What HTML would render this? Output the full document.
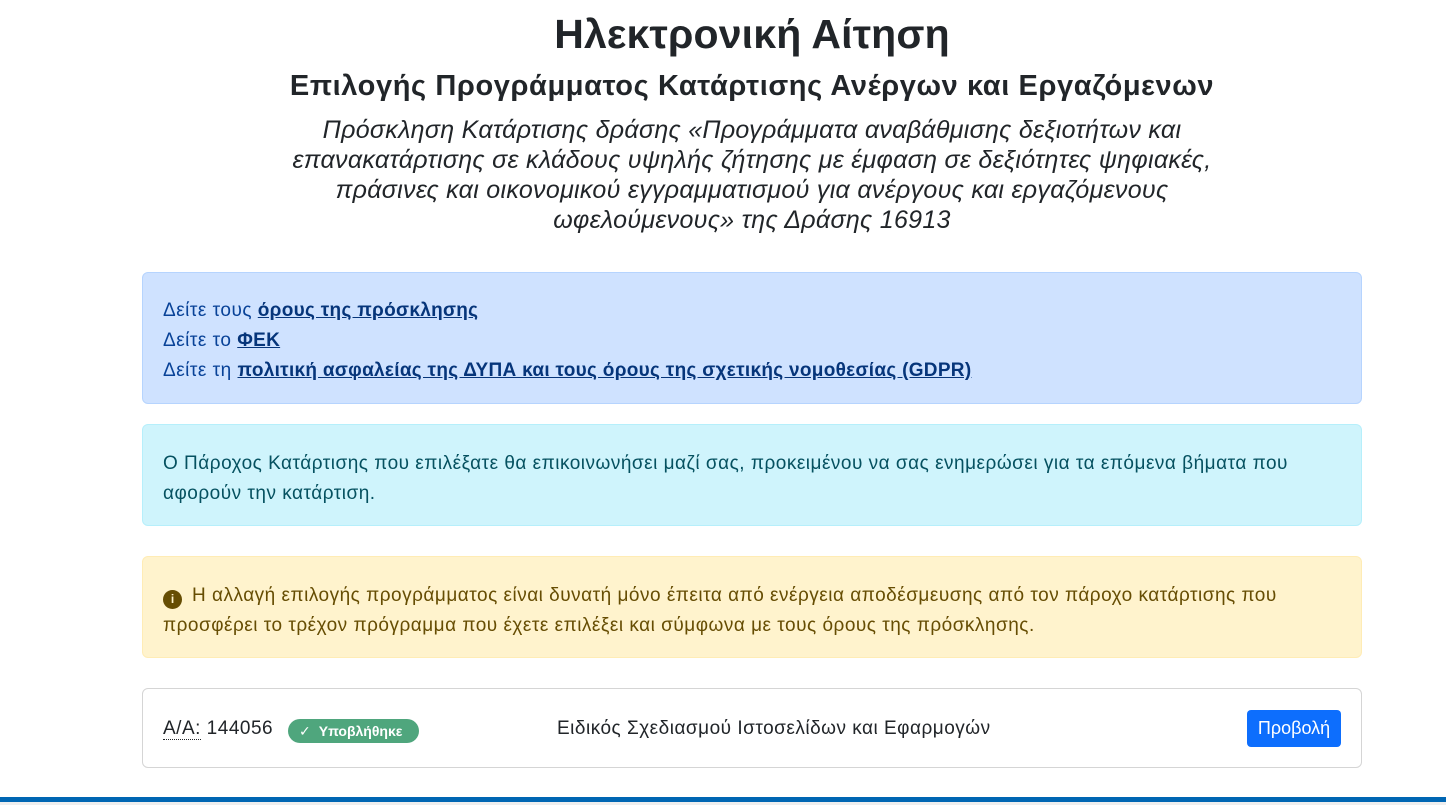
<!DOCTYPE html>
<html><head><meta charset="utf-8"><style>
body{margin:0;background:#fff;font-family:"Liberation Sans","DejaVu Sans",sans-serif;color:#212529;width:1446px;height:805px;overflow:hidden;position:relative}
h1{position:absolute;left:142px;width:1220px;top:9px;margin:0;text-align:center;font-size:41px;font-weight:bold;line-height:50px;letter-spacing:0.15px}
h2{position:absolute;left:142px;width:1220px;top:66px;margin:0;text-align:center;font-size:29px;font-weight:bold;line-height:40px;letter-spacing:0.6px}
.it{position:absolute;left:282px;width:940px;top:115px;text-align:center;font-style:italic;font-size:25px;line-height:30px;letter-spacing:0.3px;color:#212529}
.al{position:absolute;left:142px;width:1220px;box-sizing:border-box;border:1px solid;border-radius:6px;padding:0 20px;font-size:19px;letter-spacing:0.5px;line-height:30px}
.a1{top:272px;height:132px;background:#cfe2ff;border-color:#b6d4fe;color:#084298;padding-top:23px}
.a1 a{color:#06357a;font-weight:bold;text-decoration:underline;letter-spacing:0.3px}
.a2{top:424px;height:102px;background:#cff4fc;border-color:#b6effb;color:#055160;padding-top:24px}
.a3{top:556px;height:102px;background:#fff3cd;border-color:#ffecb5;color:#664d03;padding-top:24px}
.card{position:absolute;left:142px;top:688px;width:1220px;height:80px;box-sizing:border-box;border:1px solid #d5d5d5;border-radius:6px;font-size:19px;letter-spacing:0.5px}
.badge{position:absolute;left:145px;top:30px;height:24px;width:131px;background:#4fa67d;border-radius:12px;color:#fff;font-size:14px;font-weight:bold;line-height:24px;letter-spacing:0}
.btn{position:absolute;left:1104px;top:21px;width:94px;height:37px;background:#0d6efd;border-radius:4px;color:#fff;font-size:18px;line-height:37px;text-align:center;letter-spacing:0}
.bar{position:absolute;left:0;top:797px;width:1446px;height:5px;background:#0066b3}
.bar2{position:absolute;left:0;top:802px;width:1446px;height:3px;background:#eee}
</style></head><body>
<h1>Ηλεκτρονική Αίτηση</h1>
<h2>Επιλογής Προγράμματος Κατάρτισης Ανέργων και Εργαζόμενων</h2>
<div class="it">Πρόσκληση Κατάρτισης δράσης «Προγράμματα αναβάθμισης δεξιοτήτων και επανακατάρτισης σε κλάδους υψηλής ζήτησης με έμφαση σε δεξιότητες ψηφιακές, πράσινες και οικονομικού εγγραμματισμού για ανέργους και εργαζόμενους ωφελούμενους» της Δράσης 16913</div>
<div class="al a1">Δείτε τους <a>όρους της πρόσκλησης</a><br>Δείτε το <a>ΦΕΚ</a><br>Δείτε τη <a>πολιτική ασφαλείας της ΔΥΠΑ και τους όρους της σχετικής νομοθεσίας (GDPR)</a></div>
<div class="al a2">Ο Πάροχος Κατάρτισης που επιλέξατε θα επικοινωνήσει μαζί σας, προκειμένου να σας ενημερώσει για τα επόμενα βήματα που αφορούν την κατάρτιση.</div>
<div class="al a3"><span style="display:inline-block;width:19px;height:19px;border-radius:50%;background:#664d03;color:#fff3cd;font-size:12px;line-height:19px;text-align:center;font-weight:bold;vertical-align:-2px;margin-right:10px;letter-spacing:0">i</span>Η αλλαγή επιλογής προγράμματος είναι δυνατή μόνο έπειτα από ενέργεια αποδέσμευσης από τον πάροχο κατάρτισης που προσφέρει το τρέχον πρόγραμμα που έχετε επιλέξει και σύμφωνα με τους όρους της πρόσκλησης.</div>
<div class="card">
<span style="position:absolute;left:20px;top:29px"><span style="border-bottom:1px dotted #212529">Α/Α:</span> 144056</span>
<div class="badge"><span style="margin:0 8px 0 11px">✓</span>Υποβλήθηκε</div>
<span style="position:absolute;left:414px;top:29px">Ειδικός Σχεδιασμού Ιστοσελίδων και Εφαρμογών</span>
<div class="btn">Προβολή</div>
</div>
<div class="bar"></div><div class="bar2"></div>
</body></html>
